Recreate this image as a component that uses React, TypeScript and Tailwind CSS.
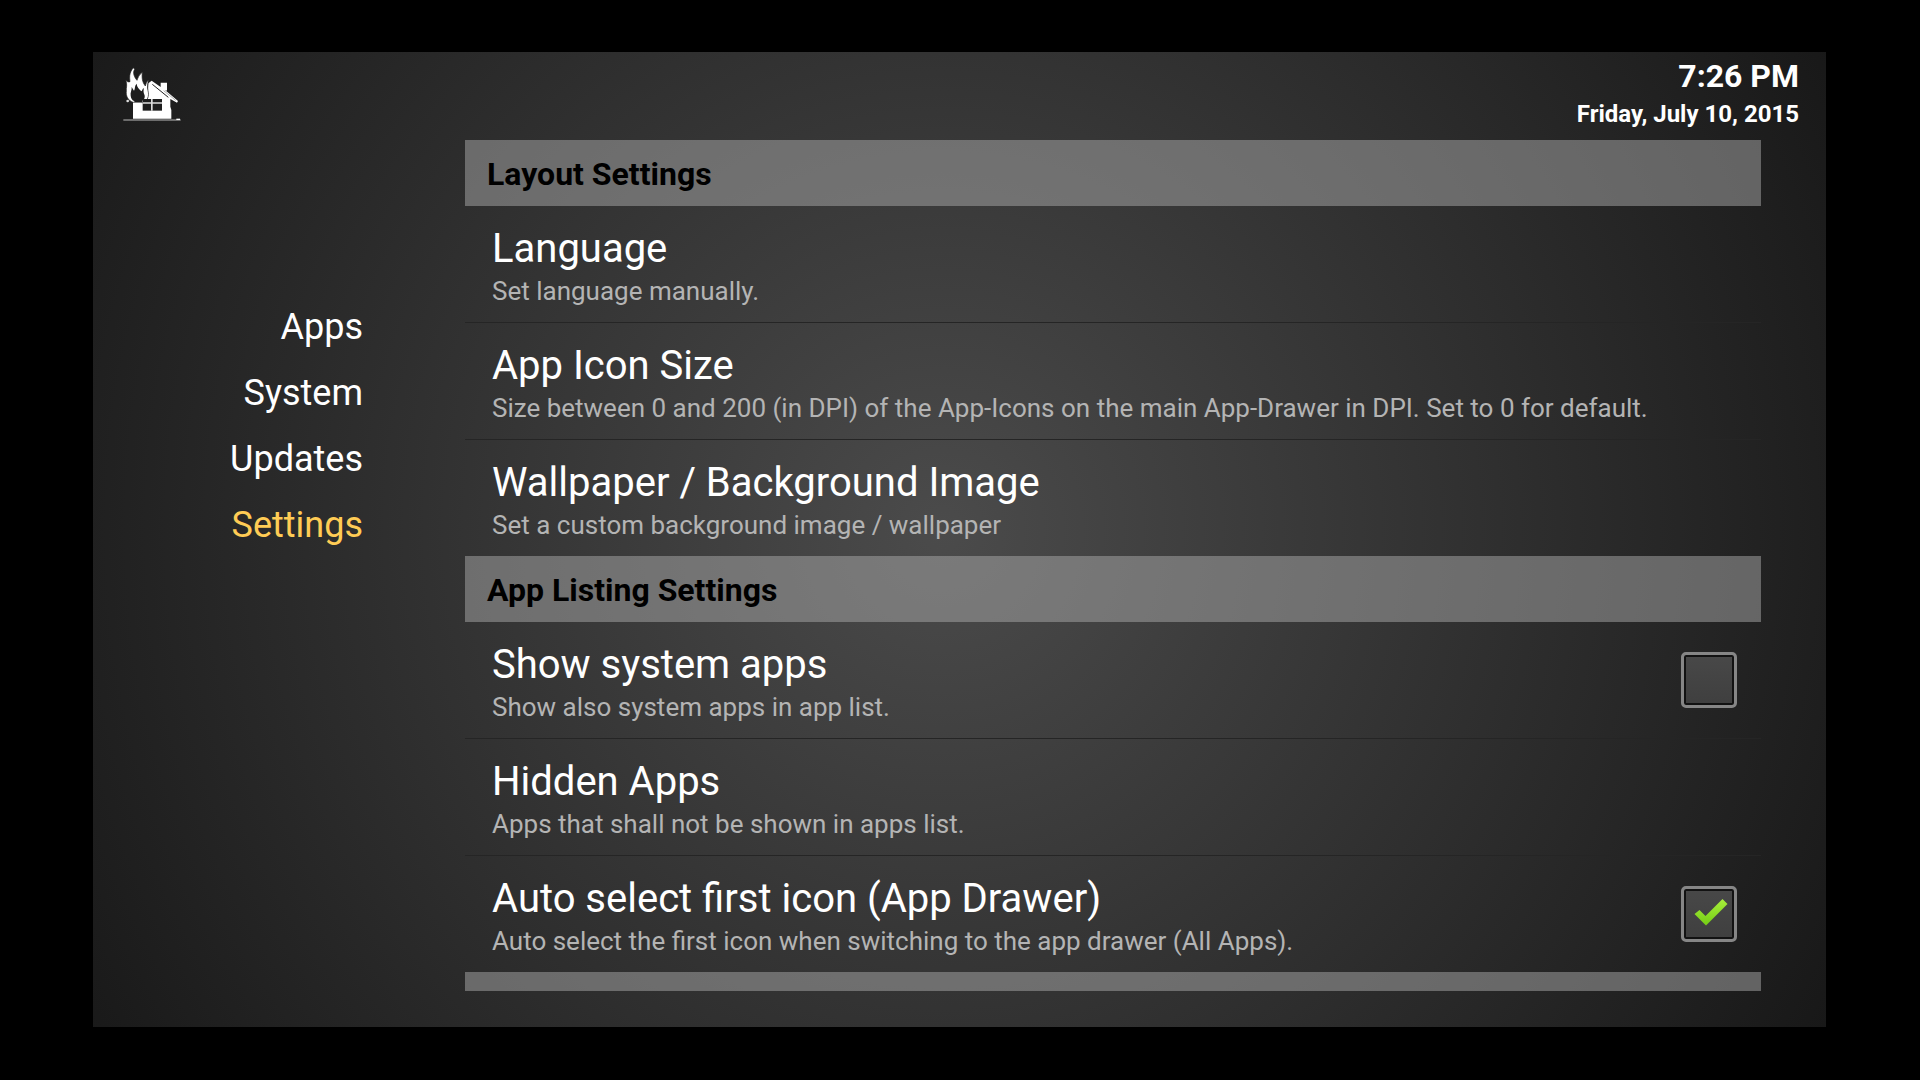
import React from "react";

type Item = { title: string; summary: string; checked?: boolean };
type Section = { title: string; items: Item[] };

const nav = ["Apps", "System", "Updates", "Settings"];

const sections: Section[] = [
  {
    title: "Layout Settings",
    items: [
      { title: "Language", summary: "Set language manually." },
      {
        title: "App Icon Size",
        summary:
          "Size between 0 and 200 (in DPI) of the App-Icons on the main App-Drawer in DPI. Set to 0 for default.",
      },
      {
        title: "Wallpaper / Background Image",
        summary: "Set a custom background image / wallpaper",
      },
    ],
  },
  {
    title: "App Listing Settings",
    items: [
      {
        title: "Show system apps",
        summary: "Show also system apps in app list.",
        checked: false,
      },
      {
        title: "Hidden Apps",
        summary: "Apps that shall not be shown in apps list.",
      },
      {
        title: "Auto select first icon (App Drawer)",
        summary:
          "Auto select the first icon when switching to the app drawer (All Apps).",
        checked: true,
      },
    ],
  },
  { title: "", items: [] },
];

function Logo() {
  return (
    <svg viewBox="120 78 186 168" className="h-14 w-[62px]" aria-label="Home" role="img">
      <path
        fill="#fff"
        d="M202 130 L212 122 L239 141 V128 H258 V152 L252 150 L291 183 L288 188 L268 177 V200 L271 210 V236 H156 V184 L184 187 L200 176 Z"
      />
      <path d="M214 133 L262 172" stroke="#222" strokeWidth="3" fill="none" />
      <path d="M248 152 L284 181" stroke="#888" strokeWidth="2" fill="none" />
      <path
        fill="#fff"
        stroke="#1e1e1e"
        strokeWidth="2"
        d="M157 83 C143 100 146 114 147 125 C141 127 137 124 134 121 C140 134 135 143 136 153 C134 168 141 181 156 187 H186 C198 183 206 170 201 152 C198 141 200 132 202 121 C197 124 195 131 193 138 C188 131 181 122 184 97 C174 104 171 113 168 121 C160 112 154 98 161 88 Z"
      />
      <path
        fill="#1e1e1e"
        d="M167 131 C160 138 163 147 159 152 C156 149 155 145 152 141 C153 151 147 158 149 167 C150 176 154 181 160 183 V186 H184 V182 C192 177 193 168 189 161 C186 154 189 149 188 144 C184 147 184 152 181 154 C175 148 167 141 167 131 Z"
      />
      <circle cx="140" cy="183" r="4" fill="#ddd" />
      <path fill="#1e1e1e" d="M185 177 H243 V212 H185 Z" />
      <path fill="#ddd" d="M210 177 H215 V212 H210 Z M185 187 H243 V191 H185 Z" />
      <path d="M127 240 H299" stroke="#bbb" strokeWidth="3" />
      <path d="M286 238 H297" stroke="#fff" strokeWidth="4" />
    </svg>
  );
}

function CheckBox({ id, checked }: { id: string; checked: boolean }) {
  return (
    <span className="grid shrink-0 place-items-center">
      <input
        id={id}
        type="checkbox"
        defaultChecked={checked}
        className="peer col-start-1 row-start-1 size-14 appearance-none rounded-[5px] border-[3px] border-[#868686] bg-linear-to-b from-[#484848] to-[#3f3f3f] shadow-[inset_0_0_0_2px_#121212]"
      />
      <svg
        viewBox="0 0 56 56"
        className="pointer-events-none invisible col-start-1 row-start-1 size-14 peer-checked:visible"
        aria-hidden="true"
      >
        <defs>
          <linearGradient id="tick" x1="0" y1="0" x2="0" y2="1">
            <stop offset="0" stopColor="#a8ee3c" />
            <stop offset="1" stopColor="#74cc14" />
          </linearGradient>
        </defs>
        <path
          fill="url(#tick)"
          d="M13.500 28 L18.500 24 L24.500 30 L41.500 13 L46.500 18 L25 39.500 Z"
        />
      </svg>
    </span>
  );
}

function Row({ item, id }: { item: Item; id: string }) {
  const hasBox = item.checked !== undefined;
  const text = (
    <>
      <span className="block text-[40px] leading-[46px] text-white">{item.title}</span>
      <span className="block text-[26px] leading-[38px] text-[#b4b4b4]">{item.summary}</span>
    </>
  );
  return (
    <li className="border-b border-[#252525] last:border-b-0">
      {hasBox ? (
        <div className="flex items-center justify-between pr-6">
          <label htmlFor={id} className="flex-1 pt-5 pb-3 pl-[27px]">
            {text}
          </label>
          <CheckBox id={id} checked={!!item.checked} />
        </div>
      ) : (
        <button type="button" className="block w-full pt-5 pb-3 pl-[27px] text-left">
          {text}
        </button>
      )}
    </li>
  );
}

export default function App() {
  return (
    <div className="h-screen bg-black pt-[52px] pr-[94px] pb-[53px] pl-[93px] font-['Roboto',sans-serif]">
      <div className="flex h-full flex-col bg-[radial-gradient(circle_farthest-corner_at_49%_49%,#4b4b4b_0%,#181818_100%)]">
        <header className="flex h-[88px] shrink-0 justify-between pr-[27px] pl-7">
          <div className="pt-3.5">
            <Logo />
          </div>
          <div className="pt-1 text-right font-bold text-white">
            <div className="text-[32px] leading-10">7:26 PM</div>
            <div className="text-2xl leading-9">Friday, July 10, 2015</div>
          </div>
        </header>
        <div className="flex min-h-0 flex-1 pr-[65px] pb-9">
          <nav className="w-[372px] shrink-0 pt-[154px] pr-[102px]">
            <ul className="flex flex-col items-end">
              {nav.map((name) => (
                <li key={name}>
                  <a
                    href={"#" + name.toLowerCase()}
                    aria-current={name === "Settings" ? "page" : undefined}
                    className={
                      name === "Settings"
                        ? "block text-4xl leading-[66px] text-[#ffcc55]"
                        : "block text-4xl leading-[66px] text-white"
                    }
                  >
                    {name}
                  </a>
                </li>
              ))}
            </ul>
          </nav>
          <main className="min-w-0 flex-1 overflow-hidden">
            {sections.map((section, s) => (
              <section key={s}>
                <h2 className="h-[66px] bg-[#aaaaaa]/50 pt-0.5 pl-[22px] text-[32px] leading-[64px] font-bold text-black">
                  {section.title}
                </h2>
                <ul>
                  {section.items.map((item, i) => (
                    <Row key={item.title} item={item} id={"setting-" + s + "-" + i} />
                  ))}
                </ul>
              </section>
            ))}
          </main>
        </div>
      </div>
    </div>
  );
}
